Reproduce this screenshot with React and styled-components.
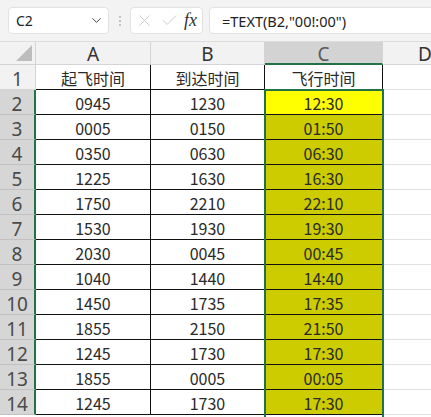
import React from 'react'
import styled, { createGlobalStyle } from 'styled-components'
import { ChevronDown, X, Check } from 'lucide-react'

const rows = [
  ['0945', '1230', '12:30'],
  ['0005', '0150', '01:50'],
  ['0350', '0630', '06:30'],
  ['1225', '1630', '16:30'],
  ['1750', '2210', '22:10'],
  ['1530', '1930', '19:30'],
  ['2030', '0045', '00:45'],
  ['1040', '1440', '14:40'],
  ['1450', '1735', '17:35'],
  ['1855', '2150', '21:50'],
  ['1245', '1730', '17:30'],
  ['1855', '0005', '00:05'],
  ['1245', '1730', '17:30'],
]

const GREEN = '#217346'

const App = () => {
  return (
    <>
      <Global />
      <Page>
        <Toolbar>
          <NameBox>
            <span>C2</span>
            <ChevronDown size={15} strokeWidth={1.6} color="#444" />
          </NameBox>
          <Dots>
            <i />
            <i />
            <i />
          </Dots>
          <ActionBox>
            <X size={19} strokeWidth={1.1} color="#c4c4c4" />
            <Check size={19} strokeWidth={1.1} color="#c4c4c4" />
            <Fx>fx</Fx>
          </ActionBox>
          <FormulaBox>=TEXT(B2,"00!:00")</FormulaBox>
        </Toolbar>

        <Sheet>
          <Grid>
            <Corner>
              <Triangle />
            </Corner>
            <ColHead>A</ColHead>
            <ColHead>B</ColHead>
            <ColHead $active>C</ColHead>
            <ColHead $last>D</ColHead>

            <RowHead>1</RowHead>
            <DataCell>起飞时间</DataCell>
            <DataCell>到达时间</DataCell>
            <DataCell>飞行时间</DataCell>
            <EmptyCell />

            {rows.map((r, i) => (
              <React.Fragment key={i}>
                <RowHead $active>{i + 2}</RowHead>
                <DataCell>{r[0]}</DataCell>
                <DataCell>{r[1]}</DataCell>
                <DataCell $fill={i === 0 ? '#ffff00' : '#cccc00'}>{r[2]}</DataCell>
                <EmptyCell />
              </React.Fragment>
            ))}
          </Grid>
          <Selection />
        </Sheet>
      </Page>
    </>
  )
}

export default App

const Global = createGlobalStyle`
  * { box-sizing: border-box; }
  body {
    margin: 0;
    background: #fff;
    font-family: "Noto Sans CJK SC", "Noto Sans", sans-serif;
  }
`

const Page = styled.div`
  width: 431px;
  height: 417px;
  overflow: hidden;
  background: #fff;
`

const Toolbar = styled.div`
  display: flex;
  align-items: center;
  height: 42px;
  padding-left: 8px;
  background: #f3f3f3;
  border-bottom: 1px solid #dcdcdc;
  font-family: "Noto Sans", sans-serif;
  font-size: 14px;
  color: #222;
`

const NameBox = styled.div`
  display: flex;
  align-items: center;
  justify-content: space-between;
  width: 101px;
  height: 27px;
  padding: 0 4px 0 7px;
  background: #fff;
  border: 1px solid #e2e2e2;
  border-radius: 4px;
`

const Dots = styled.div`
  display: flex;
  flex-direction: column;
  gap: 2px;
  width: 21px;
  align-items: center;
  i {
    width: 2px;
    height: 2px;
    background: #b5b5b5;
    border-radius: 50%;
  }
`

const ActionBox = styled.div`
  display: flex;
  align-items: center;
  justify-content: space-between;
  width: 73px;
  height: 27px;
  padding: 0 5px 0 4px;
  background: #fff;
  border: 1px solid #e2e2e2;
  border-radius: 4px;
`

const Fx = styled.span`
  font-family: "Liberation Serif", serif;
  font-style: italic;
  font-size: 18px;
  color: #333;
  line-height: 1;
  margin-top: -2px;
`

const FormulaBox = styled.div`
  display: flex;
  align-items: center;
  flex: 1;
  height: 27px;
  margin-left: 6px;
  margin-right: -10px;
  padding-left: 12px;
  background: #fff;
  border: 1px solid #e2e2e2;
  border-radius: 4px;
  font-size: 14.5px;
`

const Sheet = styled.div`
  position: relative;
`

const Grid = styled.div`
  display: grid;
  grid-template-columns: 36px 115px 114px 118px 80px;
  grid-template-rows: 23px;
  grid-auto-rows: 25px;
  width: 463px;
`

const Corner = styled.div`
  position: relative;
  background: #f2f2f2;
  border-right: 1px solid #d4d4d4;
  border-bottom: 1px solid #d4d4d4;
`

const Triangle = styled.div`
  position: absolute;
  right: 3px;
  bottom: 3px;
  width: 0;
  height: 0;
  border-left: 16px solid transparent;
  border-bottom: 16px solid #bdbdbd;
`

const ColHead = styled.div`
  display: flex;
  align-items: center;
  justify-content: ${(p) => (p.$last ? 'flex-start' : 'center')};
  padding-left: ${(p) => (p.$last ? '35px' : '0')};
  padding-top: 2px;
  background: ${(p) => (p.$active ? '#d3d3d3' : '#f2f2f2')};
  border-right: 1px solid ${(p) => (p.$last ? 'transparent' : '#d4d4d4')};
  border-bottom: ${(p) => (p.$active ? `2px solid ${GREEN}` : '1px solid #d4d4d4')};
  font-family: "Noto Sans", sans-serif;
  font-size: 19px;
  color: ${(p) => (p.$active ? '#5a5a5a' : '#333')};
`

const RowHead = styled.div`
  display: flex;
  align-items: center;
  justify-content: center;
  background: ${(p) => (p.$active ? '#d6d6d6' : '#f2f2f2')};
  border-right: ${(p) => (p.$active ? `2px solid ${GREEN}` : '1px solid #d4d4d4')};
  border-bottom: 1px solid ${(p) => (p.$active ? '#c2c2c2' : '#d4d4d4')};
  font-family: "Noto Sans", sans-serif;
  font-size: 19px;
  color: #4a4a4a;
  padding-top: 3px;
`

const DataCell = styled.div`
  display: flex;
  align-items: center;
  justify-content: center;
  background: ${(p) => p.$fill || '#fff'};
  border-right: 1px solid #111;
  border-bottom: 1px solid #111;
  font-size: 16px;
  color: #2a2a2a;
  padding-top: 1px;
`

const EmptyCell = styled.div`
  background: #fff;
  border-bottom: 1px solid #e1e1e1;
`

const Selection = styled.div`
  position: absolute;
  top: 47px;
  left: 264px;
  width: 120px;
  height: 400px;
  border: 2px solid ${GREEN};
  pointer-events: none;
`
